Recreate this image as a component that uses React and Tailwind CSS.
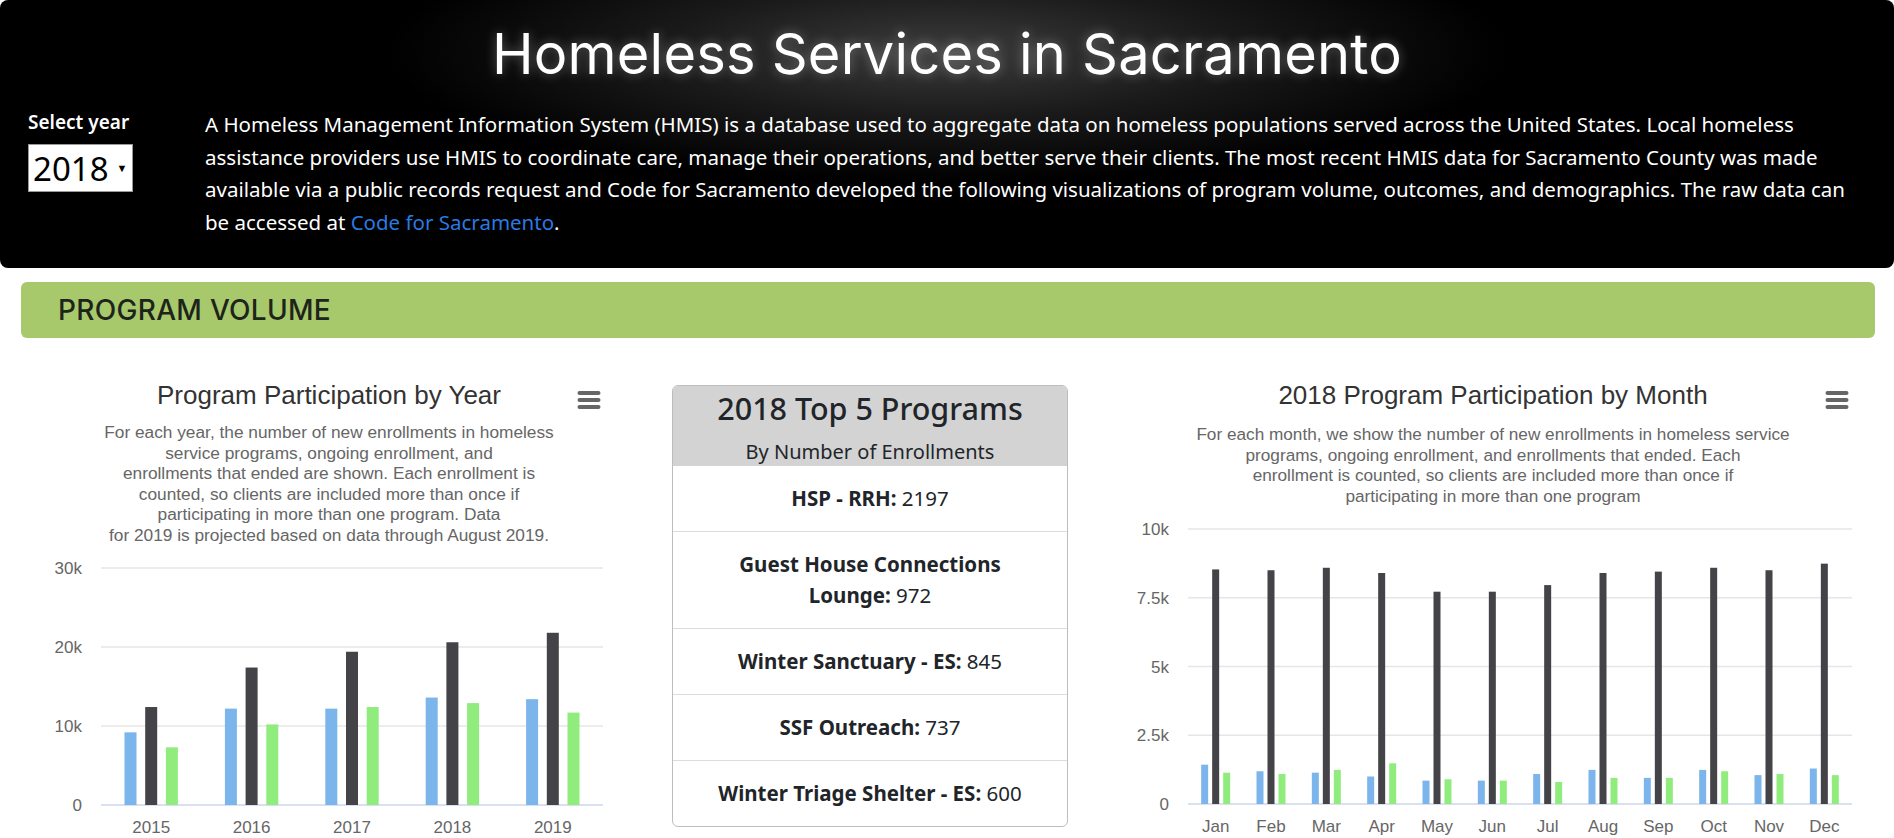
import React from 'react';

const COLORS = ['#7cb5ec', '#434348', '#90ed7d'];

const yearData = [
  { label: '2015', values: [9200, 12400, 7300] },
  { label: '2016', values: [12200, 17400, 10200] },
  { label: '2017', values: [12200, 19400, 12400] },
  { label: '2018', values: [13600, 20600, 12900] },
  { label: '2019', values: [13400, 21800, 11700] },
];

const monthData = [
  { label: 'Jan', values: [1430, 8530, 1140] },
  { label: 'Feb', values: [1190, 8500, 1090] },
  { label: 'Mar', values: [1140, 8590, 1240] },
  { label: 'Apr', values: [1000, 8400, 1480] },
  { label: 'May', values: [850, 7720, 900] },
  { label: 'Jun', values: [850, 7720, 850] },
  { label: 'Jul', values: [1090, 7960, 800] },
  { label: 'Aug', values: [1240, 8400, 950] },
  { label: 'Sep', values: [950, 8450, 950] },
  { label: 'Oct', values: [1240, 8590, 1190] },
  { label: 'Nov', values: [1050, 8500, 1090] },
  { label: 'Dec', values: [1290, 8740, 1050] },
];

const topPrograms = [
  { name: 'HSP - RRH:', count: 2197 },
  { name: 'Guest House Connections Lounge:', count: 972, wrap: true },
  { name: 'Winter Sanctuary - ES:', count: 845 },
  { name: 'SSF Outreach:', count: 737 },
  { name: 'Winter Triage Shelter - ES:', count: 600 },
];

const chartFont = { fontFamily: '"Liberation Sans", Arial, sans-serif' };

const MenuIcon = () => (
  <svg width="24" height="20" viewBox="0 0 24 20" className="absolute">
    <rect x="0.5" y="2" width="23" height="4" rx="2" fill="#666" />
    <rect x="0.5" y="9" width="23" height="4" rx="2" fill="#666" />
    <rect x="0.5" y="16" width="23" height="4" rx="2" fill="#666" />
  </svg>
);

// plain column chart, highcharts-ish
const BarChart = ({ data, width, height, left, right, top, bottom, max, ticks, barW, barGap }) => {
  const plotW = right - left;
  const plotH = bottom - top;
  const catW = plotW / data.length;
  const y = (v) => bottom - (v / max) * plotH;
  return (
    <svg width={width} height={height} style={chartFont}>
      {ticks.map((t) => (
        <g key={t.v}>
          <line x1={left} x2={right} y1={y(t.v)} y2={y(t.v)} stroke={t.v === 0 ? '#ccd6eb' : '#e6e6e6'} strokeWidth="1.5" />
          <text x={left - 19} y={y(t.v) + 6} textAnchor="end" fontSize="17" fill="#666">{t.label}</text>
        </g>
      ))}
      {data.map((d, i) => {
        const cx = left + catW * (i + 0.5);
        return (
          <g key={d.label}>
            {d.values.map((v, j) => (
              <rect
                key={j}
                x={cx + (j - 1) * barGap - barW / 2}
                y={y(v)}
                width={barW}
                height={bottom - y(v)}
                fill={COLORS[j]}
              />
            ))}
            <text x={cx} y={bottom + 28} textAnchor="middle" fontSize="17" fill="#666">{d.label}</text>
          </g>
        );
      })}
    </svg>
  );
};

export default function App() {
  return (
    <div className="min-h-screen w-[1894px] bg-white font-['Noto_Sans',sans-serif]">
      {/* Header */}
      <header className="h-[268px] rounded-lg bg-black bg-[radial-gradient(ellipse_560px_130px_at_50%_52px,#3c3c3c_0%,#1a1a1a_50%,#000_100%)] text-white">
        <h1 className="pt-[14px] text-center font-['Inter',sans-serif] text-[56px] leading-[80px] tracking-[0.2px] [text-shadow:0_0_12px_rgba(255,255,255,0.35)]">
          Homeless Services in Sacramento
        </h1>
        <div className="mt-[14px] flex">
          <div className="w-[205px] shrink-0 pl-[28px]">
            <div className="pt-[2px] text-[19px] font-semibold leading-[24px]">Select year</div>
            <div className="mt-[10px] flex h-[48px] w-[105px] items-center border border-[#999] bg-white pl-[4px] text-black">
              <span className="text-[33px] leading-none">2018</span>
              <span className="ml-[8px] text-[11px]">▼</span>
            </div>
          </div>
          <p className="text-[20.5px] leading-[32.6px] whitespace-nowrap">
            A Homeless Management Information System (HMIS) is a database used to aggregate data on homeless populations served across the United States. Local homeless
            <br />
            assistance providers use HMIS to coordinate care, manage their operations, and better serve their clients. The most recent HMIS data for Sacramento County was made
            <br />
            available via a public records request and Code for Sacramento developed the following visualizations of program volume, outcomes, and demographics. The raw data can
            <br />
            be accessed at <a href="#" className="text-[#2a7ae2]">Code for Sacramento</a>.
          </p>
        </div>
      </header>

      {/* Section bar */}
      <div className="mt-[14px] ml-[21px] mr-[19px] flex h-[56px] items-center rounded-md bg-[#a8c96b] pl-[37px]">
        <h2 className="font-['Inter',sans-serif] text-[28px] font-medium tracking-[0.3px] text-[#1d241b]">PROGRAM VOLUME</h2>
      </div>

      {/* Charts row */}
      <div className="mt-[47px] flex items-start">
        {/* Year chart */}
        <div className="relative ml-[21px] w-[616px]" style={chartFont}>
          <div className="absolute left-[556px] top-[4px]"><MenuIcon /></div>
          <h3 className="text-center text-[26px] leading-[20px] text-[#333]">Program Participation by Year</h3>
          <p className="mt-[17px] text-center text-[17.3px] leading-[20.6px] text-[#666] whitespace-nowrap">
            For each year, the number of new enrollments in homeless
            <br />service programs, ongoing enrollment, and
            <br />enrollments that ended are shown. Each enrollment is
            <br />counted, so clients are included more than once if
            <br />participating in more than one program. Data
            <br />for 2019 is projected based on data through August 2019.
          </p>
          <BarChart
            data={yearData}
            width={616}
            height={293}
            left={80}
            right={582}
            top={22}
            bottom={259}
            max={30000}
            ticks={[
              { v: 0, label: '0' },
              { v: 10000, label: '10k' },
              { v: 20000, label: '20k' },
              { v: 30000, label: '30k' },
            ]}
            barW={12}
            barGap={20.7}
          />
        </div>

        {/* Top 5 card */}
        <div className="ml-[35px] w-[396px] overflow-hidden rounded-md border border-[#bdbdbd] text-center text-[#212529]">
          <div className="bg-[#d3d3d3] pt-[2px]">
            <h3 className="text-[30.5px] font-medium leading-[40px]">2018 Top 5 Programs</h3>
            <p className="mt-[10px] text-[20px] leading-[28px]">By Number of Enrollments</p>
          </div>
          {topPrograms.map((p, i) => (
            <div key={p.name} className={`py-[17px] text-[20.5px] leading-[31px] ${i > 0 ? 'border-t border-[#dcdcdc]' : ''}`}>
              {p.wrap ? (
                <>
                  <b>Guest House Connections</b>
                  <br />
                  <b>Lounge:</b> {p.count}
                </>
              ) : (
                <>
                  <b>{p.name}</b> {p.count}
                </>
              )}
            </div>
          ))}
        </div>

        {/* Month chart */}
        <div className="relative ml-[32px] w-[786px]" style={chartFont}>
          <div className="absolute left-[725px] top-[4px]"><MenuIcon /></div>
          <h3 className="text-center text-[26px] leading-[20px] text-[#333]">2018 Program Participation by Month</h3>
          <p className="mt-[19px] text-center text-[17.2px] leading-[20.6px] text-[#666] whitespace-nowrap">
            For each month, we show the number of new enrollments in homeless service
            <br />programs, ongoing enrollment, and enrollments that ended. Each
            <br />enrollment is counted, so clients are included more than once if
            <br />participating in more than one program
          </p>
          <BarChart
            data={monthData}
            width={786}
            height={333}
            left={88}
            right={752}
            top={23}
            bottom={298}
            max={10000}
            ticks={[
              { v: 0, label: '0' },
              { v: 2500, label: '2.5k' },
              { v: 5000, label: '5k' },
              { v: 7500, label: '7.5k' },
              { v: 10000, label: '10k' },
            ]}
            barW={7}
            barGap={11}
          />
        </div>
      </div>
    </div>
  );
}
